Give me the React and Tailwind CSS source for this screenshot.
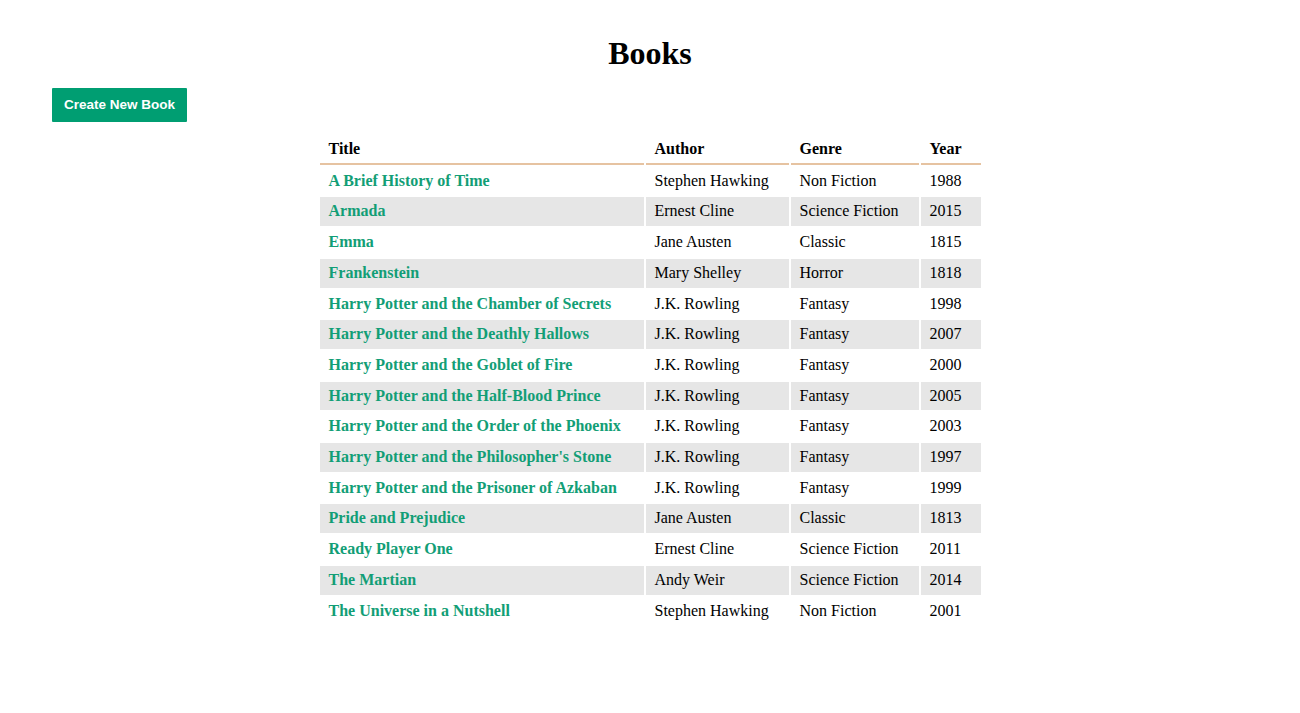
const BOOKS = [
  ["A Brief History of Time", "Stephen Hawking", "Non Fiction", "1988"],
  ["Armada", "Ernest Cline", "Science Fiction", "2015"],
  ["Emma", "Jane Austen", "Classic", "1815"],
  ["Frankenstein", "Mary Shelley", "Horror", "1818"],
  ["Harry Potter and the Chamber of Secrets", "J.K. Rowling", "Fantasy", "1998"],
  ["Harry Potter and the Deathly Hallows", "J.K. Rowling", "Fantasy", "2007"],
  ["Harry Potter and the Goblet of Fire", "J.K. Rowling", "Fantasy", "2000"],
  ["Harry Potter and the Half-Blood Prince", "J.K. Rowling", "Fantasy", "2005"],
  ["Harry Potter and the Order of the Phoenix", "J.K. Rowling", "Fantasy", "2003"],
  ["Harry Potter and the Philosopher's Stone", "J.K. Rowling", "Fantasy", "1997"],
  ["Harry Potter and the Prisoner of Azkaban", "J.K. Rowling", "Fantasy", "1999"],
  ["Pride and Prejudice", "Jane Austen", "Classic", "1813"],
  ["Ready Player One", "Ernest Cline", "Science Fiction", "2011"],
  ["The Martian", "Andy Weir", "Science Fiction", "2014"],
  ["The Universe in a Nutshell", "Stephen Hawking", "Non Fiction", "2001"],
];

const COLUMNS = [
  { name: "Title", width: "w-[324px]" },
  { name: "Author", width: "w-[143px]" },
  { name: "Genre", width: "w-[128px]" },
  { name: "Year", width: "w-[60px]" },
];

const cell = "pl-[9px] pr-[10px] py-[5px] text-left align-middle";

export default function App() {
  return (
    <div className="min-h-[713px] bg-white text-black font-['Liberation_Serif','Times_New_Roman',serif] text-[16px] leading-[18.7px]">
      {/* Page title */}
      <h1 className="pt-[35px] text-center text-[32px] font-bold leading-[37px]">Books</h1>

      <div className="mt-[16px] pl-[52px]">
        <button className="h-[34px] px-[12px] bg-[#009e72] text-white font-['Liberation_Sans',Arial,sans-serif] text-[13.5px] font-bold rounded-[1px]">
          Create New Book
        </button>
      </div>

      {/* Books table */}
      <table className="mx-auto mt-[11px] border-separate border-spacing-[2px]">
        <thead>
          <tr>
            {COLUMNS.map((c) => (
              <th key={c.name} className={`${c.width} pl-[9px] pr-[10px] pt-[5px] pb-[4px] text-left font-bold border-b-2 border-[#e6c3a1]`}>
                {c.name}
              </th>
            ))}
          </tr>
        </thead>
        <tbody>
          {BOOKS.map(([title, author, genre, year], i) => (
            <tr key={title} className={i % 2 === 1 ? "bg-[#e6e6e6]" : ""}>
              <td className={`${cell} font-bold text-[#129e76] cursor-pointer`}>{title}</td>
              <td className={cell}>{author}</td>
              <td className={cell}>{genre}</td>
              <td className={cell}>{year}</td>
            </tr>
          ))}
        </tbody>
      </table>
    </div>
  );
}
